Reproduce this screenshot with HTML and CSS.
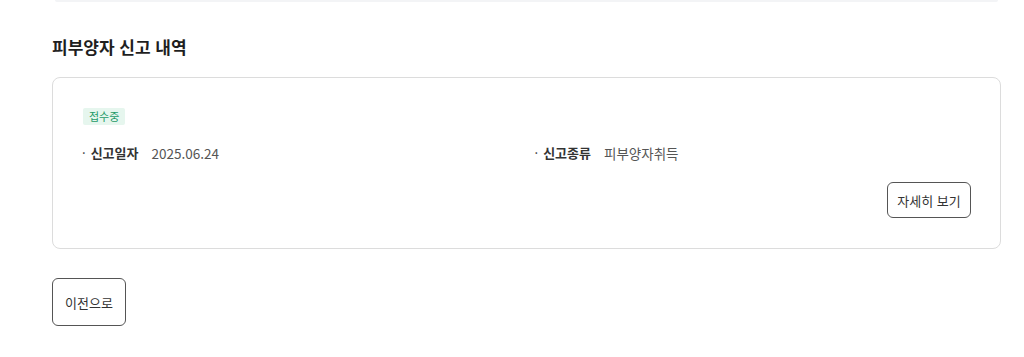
FILE: index.html
```html
<!DOCTYPE html>
<html lang="ko">
<head>
<meta charset="utf-8">
<link rel="stylesheet" href="styles.css">
</head>
<body>
<div class="page">
  <div class="prev-card"></div>
  <h2 class="section-title">피부양자 신고 내역</h2>
  <div class="card">
    <div class="badge-row"><span class="badge">접수중</span></div>
    <div class="info-grid">
      <div class="info-item"><span class="label">신고일자</span><span class="value">2025.06.24</span></div>
      <div class="info-item"><span class="label">신고종류</span><span class="value">피부양자취득</span></div>
    </div>
    <div class="card-actions">
      <button class="btn btn-sm" type="button">자세히 보기</button>
    </div>
  </div>
  <div class="page-actions">
    <button class="btn btn-md" type="button">이전으로</button>
  </div>
</div>
</body>
</html>
```
FILE: styles.css
```css
* { box-sizing: border-box; }
html, body { margin: 0; padding: 0; background: #fff; }
body {
  font-family: "Noto Sans CJK KR", "Noto Sans", sans-serif;
  color: #222;
}
.page {
  padding: 0 23px 0 52px;
}
.prev-card {
  height: 2px;
  margin: 0 3px 0 3px;
  background: #f3f4f6;
  border-radius: 0 0 4px 4px;
}
.section-title {
  margin: 0;
  padding-top: 35px;
  font-size: 17px;
  line-height: 20px;
  font-weight: 700;
  color: #1f1f1f;
}
.card {
  margin-top: 20px;
  border: 1px solid #dcdcdc;
  border-radius: 8px;
  padding: 30px 29px 30px 29px;
}
.badge-row {
  display: flex;
}
.badge {
  display: block;
  margin-left: 1px;
  height: 17px;
  line-height: 17px;
  padding: 0 6px;
  font-size: 11px;
  color: #1f9a68;
  background: #e6f6ee;
  border-radius: 2px;
}
.info-grid {
  margin-top: 18px;
  display: grid;
  grid-template-columns: 1fr 1fr;
  column-gap: 16px;
}
.info-item {
  display: flex;
  align-items: center;
  height: 20px;
  line-height: 20px;
  font-size: 13px;
}
.label {
  font-weight: 700;
  color: #333;
}
.label::before {
  content: "·";
  margin-right: 5px;
  font-weight: 400;
}
.value {
  margin-left: 13px;
  font-size: 13.5px;
  color: #555;
}
.card-actions {
  margin-top: 19px;
  display: flex;
  justify-content: flex-end;
}
.btn {
  display: block;
  font-family: inherit;
  background: #fff;
  border: 1px solid #555;
  border-radius: 6px;
  color: #333;
  cursor: pointer;
}
.btn-sm {
  height: 36px;
  width: 84px;
  font-size: 13px;
  padding: 0;
}
.page-actions {
  margin-top: 29px;
}
.btn-md {
  height: 48px;
  width: 74px;
  font-size: 13px;
  padding: 0;
}
```
